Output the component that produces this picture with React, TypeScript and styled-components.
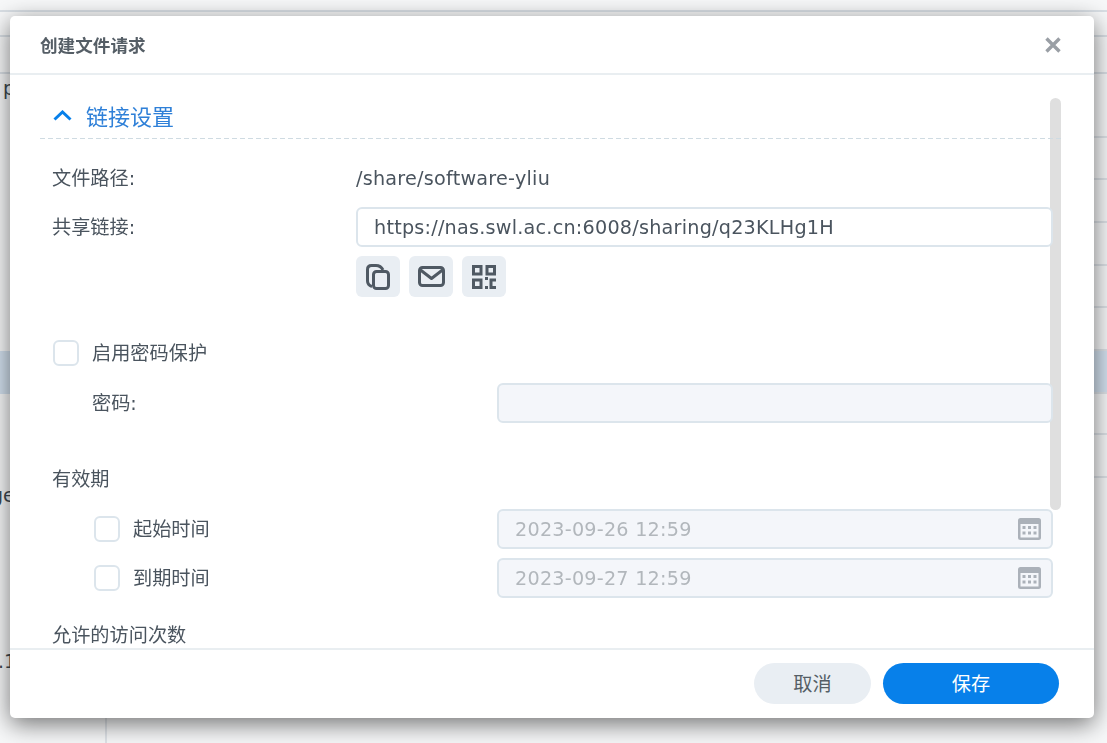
import React from 'react';
import styled, { createGlobalStyle } from 'styled-components';

const GlobalStyle = createGlobalStyle`
  html, body {
    margin: 0;
    height: 100%;
    overflow: hidden;
    background: #f7f8f9;
    font-family: "DejaVu Sans", "Noto Sans CJK SC", sans-serif;
    color: #4a545e;
  }
  * { box-sizing: border-box; }
`;

const Backdrop = styled.div`
  height: 743px;
  overflow: hidden;
  display: flex;
  flex-direction: column;
`;

const TopBand = styled.div<{ $height: number }>`
  height: ${(p) => p.$height}px;
  flex: none;
  border-bottom: 2px solid #d9dfe5;
`;

const TableRow = styled.div<{ $height: number; $selected?: boolean }>`
  height: ${(p) => p.$height}px;
  flex: none;
  display: flex;
  background: ${(p) => (p.$selected ? '#d3e1ef' : 'transparent')};
`;

const NameCell = styled.div<{ $textTop: number }>`
  width: 107px;
  flex: none;
  border-right: 2px solid #dfe3e8;
  padding-top: ${(p) => p.$textTop}px;
  font-size: 19px;
  line-height: 24px;
  color: #3f4850;
`;

const RestCell = styled.div<{ $line: boolean }>`
  flex: 1;
  border-bottom: ${(p) => (p.$line ? '2px solid #dde2e7' : 'none')};
`;

const RowText = styled.span<{ $offset: number }>`
  display: inline-block;
  margin-left: ${(p) => p.$offset}px;
`;

const Dialog = styled.div`
  position: fixed;
  top: 16px;
  left: 10px;
  width: 1084px;
  height: 702px;
  background: #fff;
  border-radius: 5px;
  box-shadow: 0 6px 24px rgba(0, 0, 0, 0.55);
  display: flex;
  flex-direction: column;
  overflow: hidden;
`;

const Header = styled.div`
  height: 59px;
  flex: none;
  display: flex;
  align-items: center;
  justify-content: space-between;
  padding: 0 31px 0 30px;
  border-bottom: 2px solid #e9eef1;
`;

const Title = styled.div`
  font-size: 17.6px;
  font-weight: 700;
  color: #555e66;
`;

const CloseButton = styled.button`
  width: 20px;
  height: 20px;
  margin-top: 1px;
  padding: 0;
  border: none;
  background: none;
  display: flex;
  align-items: center;
  justify-content: center;
`;

const Body = styled.div`
  flex: 1;
  min-height: 0;
  overflow: hidden;
  padding: 0 30px;
  position: relative;
`;

const ScrollThumb = styled.div`
  position: absolute;
  top: 23px;
  right: 33px;
  width: 11px;
  height: 412px;
  border-radius: 6px;
  background: #dfdfdf;
`;

const SectionHead = styled.div`
  position: relative;
  height: 64px;
  padding: 17px 0 1px 13px;
  display: flex;
  align-items: center;
  gap: 14px;
  background: repeating-linear-gradient(90deg, #cfdbe2 0 5px, transparent 5px 8px) left bottom / 100% 1px no-repeat;
`;

const SectionTitle = styled.div`
  font-size: 22px;
  color: #2f80d8;
`;

const Form = styled.div`
  position: relative;
  padding: 0 11px 0 12px;
`;

const Row = styled.div<{ $label: number; $top: number; $indent?: number }>`
  display: grid;
  grid-template-columns: ${(p) => p.$label}px 1fr;
  align-items: center;
  min-height: 40px;
  margin-top: ${(p) => p.$top}px;
  padding-left: ${(p) => p.$indent ?? 0}px;
`;

const Label = styled.div`
  height: 40px;
  font-size: 19.2px;
  line-height: 42px;
  white-space: nowrap;
`;

const PathValue = styled.div`
  font-size: 19.2px;
  letter-spacing: 0.24px;
`;

const Field = styled.div<{ $disabled?: boolean }>`
  height: 40px;
  padding: 0 10px 0 16px;
  display: flex;
  align-items: center;
  justify-content: space-between;
  font-size: 19.2px;
  letter-spacing: 0.23px;
  border: 2px solid #dce5ec;
  border-radius: 6px;
  background: ${(p) => (p.$disabled ? '#f4f6fa' : '#fff')};
  color: ${(p) => (p.$disabled ? '#b2b7bc' : '#4a545e')};
`;

const IconRow = styled.div`
  display: flex;
  gap: 9px;
  margin: 9px 0 0 304px;
`;

const IconButton = styled.button`
  width: 44px;
  height: 41px;
  padding: 0;
  border: none;
  border-radius: 6px;
  background: #e9eef3;
  display: flex;
  align-items: center;
  justify-content: center;
`;

const CheckLine = styled.div`
  display: flex;
  align-items: center;
  gap: 13px;
`;

const Checkbox = styled.div`
  width: 26px;
  height: 26px;
  flex: none;
  background: #fff;
  border: 2px solid #dce5ec;
  border-radius: 6px;
`;

const Footer = styled.div`
  height: 70px;
  flex: none;
  display: flex;
  align-items: center;
  justify-content: flex-end;
  gap: 12px;
  padding: 0 35px 2px 0;
  border-top: 2px solid #e9eef1;
`;

const FooterButton = styled.button<{ $primary?: boolean }>`
  width: ${(p) => (p.$primary ? 176 : 117)}px;
  height: 41px;
  border: none;
  border-radius: 21px;
  font-family: inherit;
  font-size: 19.2px;
  background: ${(p) => (p.$primary ? '#0780ea' : '#e9eef3')};
  color: ${(p) => (p.$primary ? '#fff' : '#555e66')};
`;

const CopyIcon = () => (
  <svg width="24" height="26" viewBox="0 0 24 26" fill="none" stroke="#4f5963" strokeWidth="3" strokeLinejoin="round">
    <path d="M6 22.5 C3 21.5 1.5 19.5 1.5 17 V5.5 C1.5 3 3 1.5 5.5 1.5 H10 C13 1.5 15.5 3 17 6" />
    <rect x="7.5" y="7.5" width="15" height="17" rx="3" />
  </svg>
);

const MailIcon = () => (
  <svg width="27" height="21" viewBox="0 0 27 21" fill="none" stroke="#4f5963" strokeWidth="3" strokeLinejoin="round">
    <rect x="1.5" y="1.5" width="24" height="18" rx="3" />
    <path d="M2.5 4 L13.5 12.5 L24.5 4" />
  </svg>
);

const QrIcon = () => (
  <svg width="24" height="24" viewBox="0 0 24 24" fill="none" stroke="#4f5963" strokeWidth="3">
    <rect x="1.5" y="1.5" width="7.5" height="7.5" />
    <rect x="15" y="1.5" width="7.5" height="7.5" />
    <rect x="1.5" y="15" width="7.5" height="7.5" />
    <path d="M24 15 H19 V22.5 H24" />
    <path d="M13 13.5 H16 M13 22.5 H16" />
  </svg>
);

const CalendarIcon = () => (
  <svg width="23" height="22" viewBox="0 0 23 22">
    <rect width="23" height="22" rx="2.5" fill="#abb1b9" />
    <rect x="2.5" y="6" width="18" height="13.5" fill="#f4f6fa" />
    {[4.5, 10, 15.5].map((x) =>
      [8, 13.5].map((y) => <rect key={`${x}-${y}`} x={x} y={y} width="3" height="3" fill="#abb1b9" />),
    )}
  </svg>
);

const ChevronUp = () => (
  <svg width="19" height="11" viewBox="0 0 19 11" fill="none" stroke="#0780ea" strokeWidth="3">
    <path d="M1.5 9.5 L9.5 2 L17.5 9.5" />
  </svg>
);

const CloseIcon = () => (
  <svg width="16" height="16" viewBox="0 0 16 16" fill="none" stroke="#9a9fa5" strokeWidth="3.4">
    <path d="M1.5 1.5 L14.5 14.5 M14.5 1.5 L1.5 14.5" />
  </svg>
);

const bgRows: { height: number; textTop: number; text?: string; offset?: number; selected?: boolean; noLine?: boolean }[] = [
  { height: 64, textTop: 2, text: 'p', offset: 3 },
  { height: 42, textTop: 0 },
  { height: 43, textTop: 0 },
  { height: 43, textTop: 0 },
  { height: 42, textTop: 0 },
  { height: 43, textTop: 0 },
  { height: 43, textTop: 0, selected: true },
  { height: 41, textTop: 0 },
  { height: 43, textTop: 0 },
  { height: 43, textTop: 5, text: 'ge', offset: -9, noLine: true },
  { height: 42, textTop: 0, noLine: true },
  { height: 43, textTop: 0, noLine: true },
  { height: 43, textTop: 0, noLine: true },
  { height: 94, textTop: -3, text: '.1', offset: -2, noLine: true },
];

const App: React.FC = () => {
  return (
    <>
      <GlobalStyle />
      <Backdrop>
        <TopBand $height={12} />
        <TopBand $height={25} />
        <TopBand $height={37} />
        {bgRows.map((row, i) => (
          <TableRow key={i} $height={row.height} $selected={row.selected}>
            <NameCell $textTop={row.textTop}>
              {row.text && <RowText $offset={row.offset ?? 0}>{row.text}</RowText>}
            </NameCell>
            <RestCell $line={!row.noLine} />
          </TableRow>
        ))}
      </Backdrop>
      <Dialog>
        <Header>
          <Title>创建文件请求</Title>
          <CloseButton>
            <CloseIcon />
          </CloseButton>
        </Header>
        <Body>
          <ScrollThumb />
          <SectionHead>
            <ChevronUp />
            <SectionTitle>链接设置</SectionTitle>
          </SectionHead>
          <Form>
            <Row $label={304} $top={19}>
              <Label>文件路径:</Label>
              <PathValue>/share/software-yliu</PathValue>
            </Row>
            <Row $label={304} $top={9}>
              <Label>共享链接:</Label>
              <Field>https://nas.swl.ac.cn:6008/sharing/q23KLHg1H</Field>
            </Row>
            <IconRow>
              <IconButton>
                <CopyIcon />
              </IconButton>
              <IconButton>
                <MailIcon />
              </IconButton>
              <IconButton>
                <QrIcon />
              </IconButton>
            </IconRow>
            <Row $label={445} $top={36} $indent={1}>
              <CheckLine>
                <Checkbox />
                <Label>启用密码保护</Label>
              </CheckLine>
            </Row>
            <Row $label={405} $top={10} $indent={40}>
              <Label>密码:</Label>
              <Field $disabled />
            </Row>
            <Row $label={445} $top={36}>
              <Label>有效期</Label>
            </Row>
            <Row $label={403} $top={10} $indent={42}>
              <CheckLine>
                <Checkbox />
                <Label>起始时间</Label>
              </CheckLine>
              <Field $disabled>
                2023-09-26 12:59
                <CalendarIcon />
              </Field>
            </Row>
            <Row $label={403} $top={9} $indent={42}>
              <CheckLine>
                <Checkbox />
                <Label>到期时间</Label>
              </CheckLine>
              <Field $disabled>
                2023-09-27 12:59
                <CalendarIcon />
              </Field>
            </Row>
            <Row $label={445} $top={17}>
              <Label>允许的访问次数</Label>
            </Row>
          </Form>
        </Body>
        <Footer>
          <FooterButton>取消</FooterButton>
          <FooterButton $primary>保存</FooterButton>
        </Footer>
      </Dialog>
    </>
  );
};

export default App;
